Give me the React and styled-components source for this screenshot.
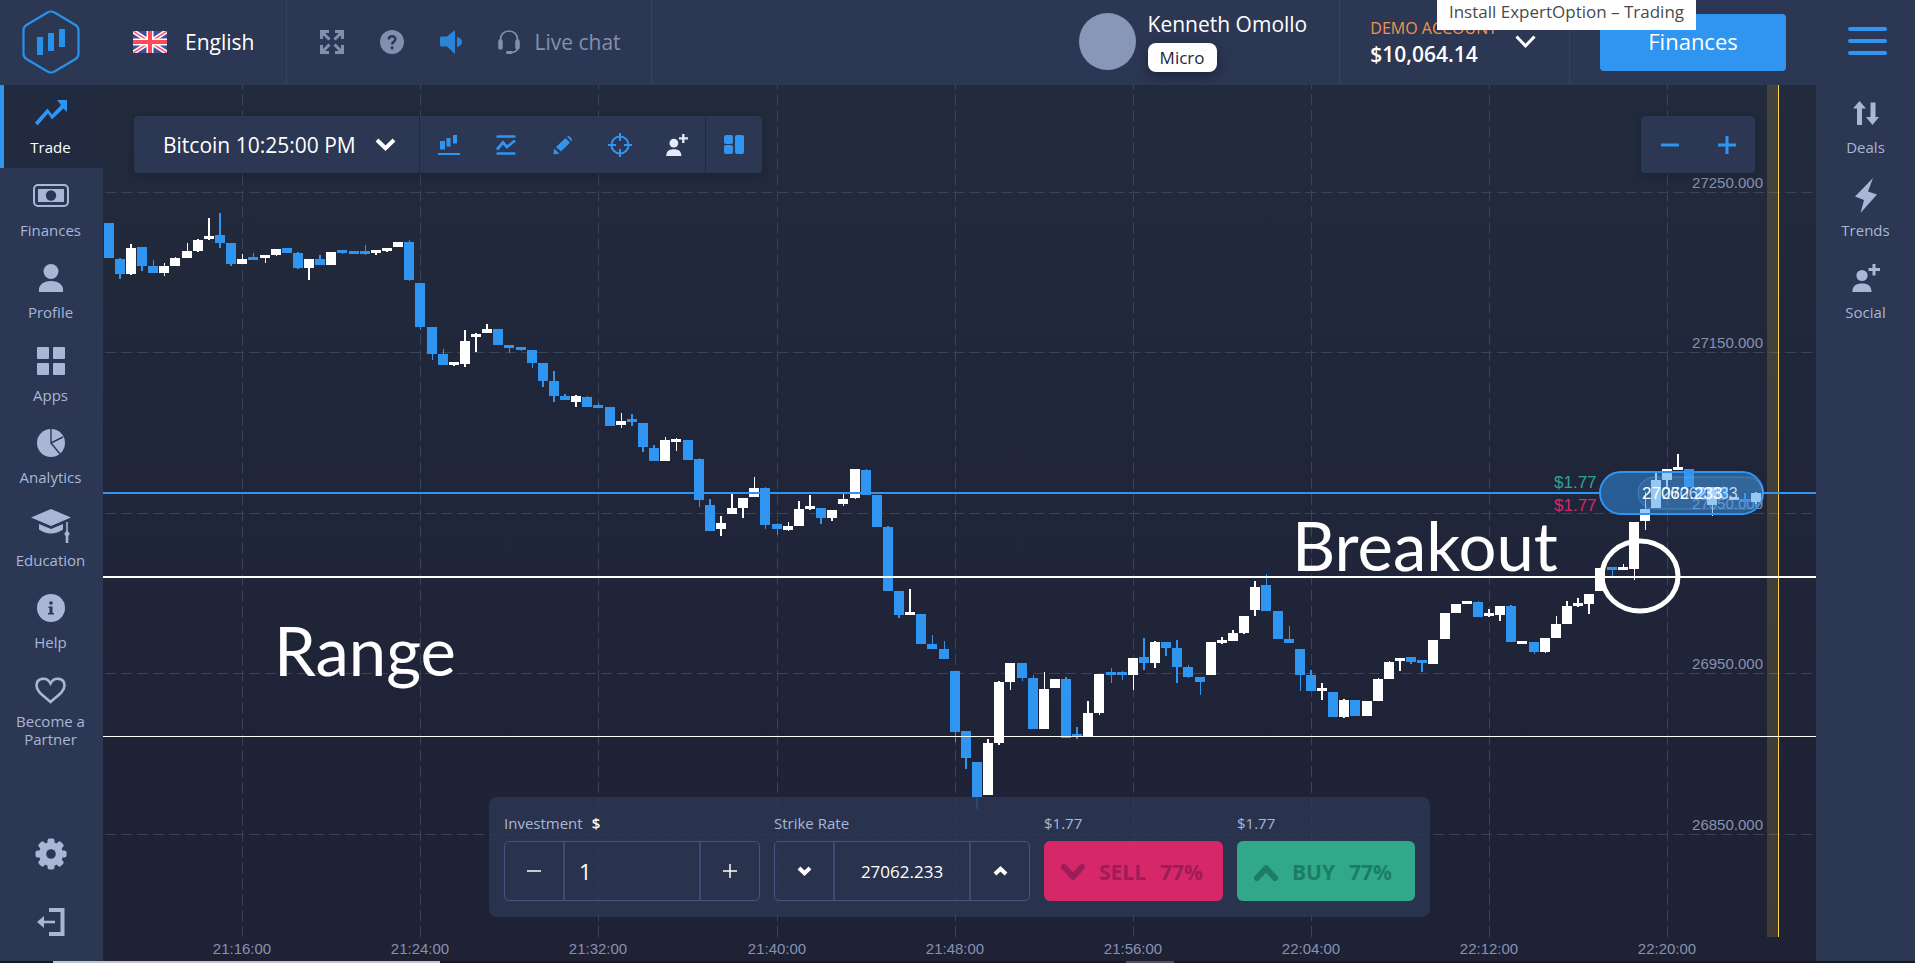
import React from "react";
import styled, { createGlobalStyle } from "styled-components";

const ui = '"Open Sans", "Noto Sans", sans-serif';
const panel = "#2c3753";
const accent = "#2f95f0";
const muted = "#a9b6d6";

const GlobalStyle = createGlobalStyle`
  *, *::before, *::after { box-sizing: border-box; }
  body { margin: 0; background: #1f2335; font-family: ${ui}; color: #fff; }
  button, input { font: inherit; color: inherit; }
  button { background: none; border: 0; padding: 0; cursor: pointer; }
  a { color: inherit; text-decoration: none; }
  svg { display: block; flex: none; }
`;

const Shell = styled.div`
  display: flex;
  flex-direction: column;
  height: 100vh;
  min-height: 900px;
  overflow: hidden;
`;

/* ---------- header ---------- */
const Header = styled.header`
  display: flex;
  align-items: stretch;
  flex: none;
  height: 85px;
  background: ${panel};
`;
const LogoLink = styled.a`
  display: flex;
  align-items: center;
  padding: 0 0 2px 22px;
  width: 103px;
`;
const HeaderCell = styled.div`
  display: flex;
  align-items: center;
  gap: ${(p) => p.$gap || 0}px;
  padding: 0 ${(p) => p.$right || 30}px ${(p) => (p.$last ? 0 : 2)}px ${(p) => p.$left || 30}px;
  border-right: ${(p) => (p.$last ? "0" : "1px solid #36425f")};
`;
const LanguageButton = styled.button`
  display: flex;
  align-items: center;
  gap: 18px;
  font-size: 21px;
`;
const IconButton = styled.button`
  display: flex;
  align-items: center;
  gap: 14px;
  color: ${(p) => p.$color || "#8290b0"};
  font-size: 21px;
`;
const Push = styled.div`
  flex: 1;
`;
const Avatar = styled.div`
  width: 57px;
  height: 57px;
  border-radius: 50%;
  background: #8896b8;
`;
const UserInfo = styled.div`
  display: flex;
  flex-direction: column;
  align-items: flex-start;
  gap: 6px;
`;
const UserName = styled.div`
  font-size: 21px;
  line-height: 26px;
`;
const Badge = styled.div`
  padding: 0 12px;
  border-radius: 8px;
  background: #fff;
  color: #22283a;
  font-size: 17px;
  line-height: 29px;
  box-shadow: 0 4px 12px rgba(15, 20, 40, 0.5);
`;
const AccountInfo = styled.div`
  display: flex;
  flex-direction: column;
`;
const AccountType = styled.div`
  color: #f0934e;
  font-size: 16px;
  line-height: 24px;
`;
const Balance = styled.div`
  font-size: 21px;
  font-weight: 600;
  line-height: 28px;
`;
const FinanceButton = styled.button`
  width: 186px;
  height: 57px;
  padding-bottom: 3px;
  border-radius: 4px;
  background: ${accent};
  font-size: 22px;
`;
const MenuButton = styled.button`
  display: flex;
  flex-direction: column;
  justify-content: center;
  align-items: center;
  gap: 8px;
  width: 95px;
  margin-left: -1px;
  padding: 0 0 4px 0;
`;
const MenuBar = styled.span`
  width: 39px;
  height: 4px;
  border-radius: 2px;
  background: ${accent};
`;
const Tooltip = styled.div`
  position: absolute;
  top: 0;
  right: 219px;
  z-index: 5;
  width: 259px;
  height: 30px;
  background: #fff;
  color: #4a4a4a;
  font-size: 17px;
  line-height: 24px;
  text-align: center;
  white-space: nowrap;
`;

/* ---------- body ---------- */
const Main = styled.div`
  display: grid;
  grid-template-columns: 103px minmax(0, 1fr) 99px;
  flex: 1;
  min-height: 0;
`;
const Side = styled.nav`
  display: flex;
  flex-direction: column;
  justify-content: space-between;
  padding-left: ${(p) => (p.$right ? 2 : 0)}px;
  background: ${panel};
`;
const SideList = styled.div`
  display: grid;
  grid-auto-rows: minmax(0, 1fr);
  height: ${(p) => (p.$rows === 8 ? 660 : 248)}px;
`;
const SideItem = styled.a`
  display: flex;
  flex-direction: column;
  align-items: center;
  padding: 8px 2px 0 0;
  gap: ${(p) => (p.$tight ? 1 : 2)}px;
  box-shadow: ${(p) => (p.$active ? `inset 4px 0 ${accent}` : "none")};
  background: ${(p) => (p.$active ? "#222a40" : "transparent")};
  color: ${(p) => (p.$active ? "#fff" : muted)};
  font-size: 15px;
  line-height: ${(p) => (p.$tight ? 18 : 24)}px;
  text-align: center;
`;
const SideIcon = styled.span`
  display: flex;
  flex: none;
  align-items: center;
  height: 40px;
  color: ${(p) => (p.$active ? accent : muted)};
`;
const SideLabel = styled.span`
  max-width: 92px;
`;
const SideFoot = styled.div`
  display: flex;
  flex-direction: column;
  align-items: center;
  gap: 38px;
  padding: 0 2px 25px 0;
  color: ${muted};
`;
const Strip = styled.div`
  display: grid;
  grid-template-columns: 53px 387px 686px 48px 1fr;
  flex: none;
  height: 2px;
  background: #17181c;
`;
const StripMark = styled.span`
  grid-column: ${(p) => p.$column};
  background: ${(p) => p.$color};
`;

/* ---------- chart area ---------- */
const Stage = styled.main`
  position: relative;
  display: flex;
  flex-direction: column;
  justify-content: space-between;
  min-width: 0;
  padding: 31px 31px 44px;
  overflow: hidden;
`;
const ChartSvg = styled.svg`
  position: absolute;
  inset: 0;
  width: 100%;
  height: 100%;
`;
const TopTools = styled.div`
  position: relative;
  display: flex;
  justify-content: space-between;
  padding-right: 30px;
`;
const ToolGroup = styled.div`
  display: flex;
  height: 57px;
  border-radius: 4px;
  background: ${panel};
  box-shadow: 0 2px 8px rgba(10, 15, 30, 0.3);
`;
const AssetButton = styled.button`
  display: flex;
  align-items: center;
  gap: 19px;
  width: 286px;
  padding-left: 29px;
  border-right: 1px solid #222a40;
  font-size: 21px;
`;
const Tool = styled.button`
  display: flex;
  align-items: center;
  justify-content: center;
  width: 57px;
  color: ${(p) => p.$color || accent};
  border-left: ${(p) => (p.$split ? "1px solid #222a40" : "0")};
`;
const TradePanel = styled.form`
  position: relative;
  align-self: center;
  display: grid;
  grid-template-columns: 256px 256px 179px 178px;
  gap: 14px;
  height: 120px;
  padding: 11px 15px 16px;
  border-radius: 8px;
  background: rgba(44, 55, 83, 0.84);
`;
const Field = styled.div`
  display: flex;
  flex-direction: column;
  justify-content: space-between;
`;
const FieldLabel = styled.label`
  display: flex;
  gap: 9px;
  color: ${muted};
  font-size: 15px;
  line-height: 30px;
`;
const Currency = styled.span`
  color: #fff;
  font-weight: 600;
`;
const Stepper = styled.div`
  display: grid;
  grid-template-columns: 58px 1fr 58px;
  height: 60px;
  border: 1px solid #465682;
  border-radius: 5px;
`;
const StepButton = styled.button`
  display: flex;
  align-items: center;
  justify-content: center;
`;
const StepInput = styled.input`
  min-width: 0;
  width: 100%;
  padding: 0 14px;
  border: 0;
  border-left: 2px solid #3d4c74;
  border-right: 2px solid #3d4c74;
  border-radius: 0;
  background: transparent;
  outline: 0;
  font-size: ${(p) => (p.$large ? 22 : 17)}px;
  text-align: ${(p) => (p.$large ? "left" : "center")};
`;
const DealButton = styled.button`
  display: flex;
  align-items: center;
  gap: 14px;
  height: 60px;
  padding: 2px 0 0 17px;
  border-radius: 6px;
  background: ${(p) => p.$bg};
  color: ${(p) => p.$fg};
  font-size: 21px;
  font-weight: 700;
  white-space: nowrap;
`;

/* ---------- icons ---------- */
const Logo = () => (
  <svg width="58" height="64" viewBox="0 0 58 64" fill="none">
    <path d="M25.5 2.5q3.500-2 7 0L53.500 15q3 2 3 5v24q0 3-3 5L32.500 61.500q-3.500 2-7 0L4.500 49q-3-2-3-5V20q0-3 3-5z" stroke="#2593ea" strokeWidth="2.200" />
    <path d="M15 27h6v18h-6zM26 23h6v18h-6zM37 19h6v18h-6z" fill="#2593ea" />
  </svg>
);
const Flag = () => (
  <svg width="34" height="22" viewBox="0 0 34 22">
    <path fill="#414b9c" d="M0 0h34v22H0z" />
    <path d="M0 0l34 22M34 0L0 22" stroke="#fff" strokeWidth="4.500" />
    <path d="M0 0l34 22M34 0L0 22" stroke="#ff5a68" strokeWidth="1.600" />
    <path d="M17 0v22M0 11h34" stroke="#fff" strokeWidth="7" />
    <path d="M17 0v22M0 11h34" stroke="#ff4b55" strokeWidth="4" />
  </svg>
);
const Expand = () => (
  <svg width="24" height="24" viewBox="0 0 24 24" fill="none" stroke="currentColor" strokeWidth="3">
    <path d="M1.500 9V1.500H9M2 2l7.500 7.500M15 1.500h7.500V9M22 2l-7.500 7.500M1.500 15v7.500H9M2 22l7.500-7.500M15 22.500h7.500V15M22 22l-7.500-7.500" />
  </svg>
);
const Help = () => (
  <svg width="24" height="24" viewBox="0 0 24 24" fill="none">
    <circle cx="12" cy="12" r="12" fill="currentColor" />
    <path d="M8.800 9.500c0-4.600 6.600-4.200 6.600-.4 0 2.600-3.300 2.700-3.300 5.300" stroke={panel} strokeWidth="2.500" />
    <circle cx="12.100" cy="17.800" r="1.600" fill={panel} />
  </svg>
);
const Volume = () => (
  <svg width="22" height="24" viewBox="0 0 22 24" fill="#2a85d8">
    <path d="M1.500 6.500H7L15 0v24l-8-7.500H1.500Q0 16.500 0 15V8q0-1.500 1.500-1.500zM17 7q5 1 5 5t-5 5z" />
  </svg>
);
const Headset = () => (
  <svg width="22" height="24" viewBox="0 0 22 24" fill="none" stroke="currentColor">
    <path d="M2.500 11V9.500C2.500 4.500 6 1 11 1s8.500 3.500 8.500 8.500V11M19.500 18c0 3-2.500 4.500-7.500 4.500" strokeWidth="1.600" />
    <path d="M2.500 11.500v6M19.500 11.500v6" strokeWidth="4.500" strokeLinecap="round" />
    <path d="M9.500 22.500h3.500" strokeWidth="3" strokeLinecap="round" />
  </svg>
);
const Chevron = ({ w = 21, h = 13, up, thick = 3, round }) => (
  <svg width={w} height={h} viewBox={`0 0 ${w} ${h}`} fill="none" stroke="currentColor" strokeWidth={thick} strokeLinecap={round ? "round" : "butt"} strokeLinejoin={round ? "round" : "miter"}>
    <path d={up
      ? `M${thick / 2} ${h - thick / 2}L${w / 2} ${thick / 1.400}L${w - thick / 2} ${h - thick / 2}`
      : `M${thick / 2} ${thick / 2}L${w / 2} ${h - thick / 1.400}L${w - thick / 2} ${thick / 2}`} />
  </svg>
);
const TradeIcon = () => (
  <svg width="32" height="26" viewBox="0 0 32 26" fill="currentColor">
    <path d="M22 0h10v12l-3.500-3.500L17 19.500l-4-6L2.500 25.500 0 22.500l12.500-14L17 14.500 26 5z" />
  </svg>
);
const MoneyIcon = () => (
  <svg width="36" height="23" viewBox="0 0 36 23" fill="none">
    <rect x="1" y="1" width="34" height="21" rx="4" stroke="currentColor" strokeWidth="2" />
    <rect x="5" y="5" width="26" height="13" fill="currentColor" />
    <circle cx="18" cy="11.500" r="5.200" fill={panel} />
  </svg>
);
const PersonIcon = () => (
  <svg width="26" height="28" viewBox="0 0 26 28" fill="currentColor">
    <circle cx="13" cy="7.500" r="7.500" />
    <path d="M1 28c-1-7 4-11 12-11s13 4 12 11z" />
  </svg>
);
const AppsIcon = () => (
  <svg width="28" height="28" viewBox="0 0 28 28" fill="currentColor">
    <rect width="12" height="12" rx="1" /><rect x="16" width="12" height="12" rx="1" />
    <rect y="16" width="12" height="12" rx="1" /><rect x="16" y="16" width="12" height="12" rx="1" />
  </svg>
);
const PieIcon = () => (
  <svg width="28" height="28" viewBox="0 0 28 28">
    <circle cx="14" cy="14" r="14" fill="currentColor" />
    <path d="M14 0v14l12-6M14 14l9 11" fill="none" stroke={panel} strokeWidth="1.400" />
  </svg>
);
const CapIcon = () => (
  <svg width="40" height="34" viewBox="0 0 40 34" fill="currentColor">
    <path d="M20 0l20 8.500L20 17 0 8.500zM8 15l12 5 12-5v5.500Q26 24.500 20 24.500T8 20.500z" />
    <path d="M35.200 13h1.600v9l2 3-1.500 2v7h-2.600v-7l-1.500-2 2-3z" />
  </svg>
);
const InfoIcon = () => (
  <svg width="28" height="28" viewBox="0 0 28 28">
    <circle cx="14" cy="14" r="14" fill="currentColor" />
    <circle cx="14" cy="9" r="1.800" fill={panel} />
    <path d="M11.500 12.500h4V19H17v1.500h-6V19h1.500v-5h-1z" fill={panel} />
  </svg>
);
const HeartIcon = () => (
  <svg width="31" height="27" viewBox="0 0 31 27" fill="none" stroke="currentColor" strokeWidth="2.600">
    <path d="M15.500 25C8 18.500 1.500 14.500 1.500 8.500c0-7.500 10-9.500 14-2 4-7.500 14-5.500 14 2 0 6-6.500 10-14 16.500z" />
  </svg>
);
const GearIcon = () => (
  <svg width="32" height="32" viewBox="0 0 32 32">
    <g fill="currentColor">
      {[0, 45, 90, 135].map((a) => (
        <rect key={a} x="12.500" y="0.500" width="7" height="31" rx="2" transform={`rotate(${a} 16 16)`} />
      ))}
      <circle cx="16" cy="16" r="12" />
    </g>
    <circle cx="16" cy="16" r="4.800" fill={panel} />
  </svg>
);
const ExitIcon = () => (
  <svg width="28" height="28" viewBox="0 0 28 28" fill="none" stroke="currentColor">
    <path d="M12 2h13.500v24H12" strokeWidth="4" />
    <path d="M2 14h16" strokeWidth="2.600" />
    <path d="M0 14l7-6v12z" fill="currentColor" stroke="none" />
  </svg>
);
const DealsIcon = () => (
  <svg width="26" height="24" viewBox="0 0 26 24" fill="currentColor">
    <path d="M6.500 0L13 7.500H9V24H4V7.500H0zM17.500 1.500h5V16H26l-6.500 8L13 16h4.500z" />
  </svg>
);
const BoltIcon = () => (
  <svg width="22" height="35" viewBox="0 0 22 35" fill="currentColor">
    <path d="M18 0L0 18.500l9 3.500L5.500 35 22 16.500l-9-3z" />
  </svg>
);
const SocialIcon = ({ s = 28 }) => (
  <svg width={s} height={s} viewBox="0 0 28 28" fill="currentColor">
    <circle cx="10" cy="11.500" r="5.600" />
    <path d="M.3 28C.3 22 4 19.500 10 19.500S19.500 22 19.500 28z" />
    <path d="M20.500 0h3v4H28v3h-4.500v4.500h-3V7h-4V4h4z" />
  </svg>
);
const BarsIcon = () => (
  <svg width="22" height="21" viewBox="0 0 22 21" fill="currentColor">
    <path d="M2 7h5v8.500H2zM8.500 4h4v8.500h-4zM15 1h4v8.500h-4zM0 19h22v2H0z" />
  </svg>
);
const IndicatorIcon = () => (
  <svg width="20" height="20" viewBox="0 0 20 20" fill="none" stroke="currentColor">
    <path d="M1.500 1.500h17M1.500 18.500h17" strokeWidth="2.400" strokeLinecap="round" />
    <path d="M1 14.500l6-7 4 4.500 8-6.500" strokeWidth="2.800" />
  </svg>
);
const PencilIcon = () => (
  <svg width="20" height="20" viewBox="0 0 20 20" fill="currentColor">
    <path d="M12.500 3l4.500 4.500-9 9L3 12zM14 1.500q1.500-1 2.800.3l1.700 1.800q1 1.400 0 3zM1 13.500l5.500 5-6 1z" />
  </svg>
);
const TargetIcon = () => (
  <svg width="24" height="24" viewBox="0 0 24 24" fill="none" stroke="currentColor" strokeWidth="2">
    <circle cx="12" cy="12" r="8.500" />
    <path d="M12 0v8M12 16v8M0 12h8M16 12h8" />
  </svg>
);
const LayoutIcon = () => (
  <svg width="20" height="19" viewBox="0 0 20 19" fill="currentColor">
    <rect width="9" height="9" rx="2" /><rect y="10" width="9" height="9" rx="2" /><rect x="11" width="9" height="19" rx="2" />
  </svg>
);
const SignIcon = ({ plus, size = 18, thick = 3 }) => (
  <svg width={size} height={size} viewBox={`0 0 ${size} ${size}`} stroke="currentColor" strokeWidth={thick}>
    <path d={`M0 ${size / 2}h${size}${plus ? `M${size / 2} 0v${size}` : ""}`} />
  </svg>
);

/* ---------- chart data ---------- */
/* left edge, high, body top, body bottom, low, 1 = rising (white) */
const candles = [
  [104,223,223,258,258,0],[115,258,259,274,279,0],[126,244,248,274,275,1],[137,247,247,266,271,0],[148,260,266,273,273,0],
  [159,263,266,273,276,1],[170,257,258,266,266,1],[182,243,251,258,258,1],[193,239,240,251,252,1],[204,218,236,239,240,1],
  [215,213,235,243,248,0],[226,243,243,264,266,0],[237,254,259,264,264,1],[248,253,257,260,260,0],[260,255,255,258,263,1],
  [271,249,249,255,256,1],[282,248,248,253,253,0],[293,252,253,268,269,0],[304,259,259,268,280,1],[315,255,259,265,265,0],
  [326,252,252,265,265,1],[337,250,250,253,254,0],[349,251,251,254,254,0],[360,245,251,254,255,0],[371,250,250,253,255,1],
  [382,248,248,251,252,1],[393,242,242,247,247,1],[404,240,242,280,281,0],[415,283,283,327,330,0],[427,327,327,354,360,0],
  [438,349,354,365,365,0],[449,362,362,365,366,1],[460,330,341,364,367,1],[471,333,334,337,352,1],[482,324,329,333,333,1],
  [493,329,329,345,345,0],[504,345,345,348,353,0],[516,347,347,350,351,0],[527,350,350,363,368,0],[538,363,363,381,387,0],
  [549,371,381,396,402,0],[560,394,396,400,400,0],[571,395,396,402,407,1],[582,396,397,407,407,0],[593,403,405,408,408,0],
  [605,407,407,426,426,0],[616,413,421,425,428,1],[627,414,419,422,426,0],[638,423,423,447,452,0],[649,445,448,461,461,0],
  [660,437,440,461,461,1],[671,438,439,442,451,1],[683,440,440,460,460,0],[694,458,459,500,507,0],[705,499,505,531,531,0],
  [716,516,523,529,536,1],[727,494,508,514,514,1],[738,498,498,508,518,1],[749,477,488,497,497,1],[760,487,488,525,529,0],
  [772,523,524,529,535,0],[783,522,526,530,531,1],[794,501,509,526,526,1],[805,495,506,509,510,1],[816,508,508,518,524,0],
  [827,510,510,518,521,1],[838,494,499,504,506,1],[850,469,469,498,499,1],[861,469,470,495,495,0],[872,495,495,527,527,0],
  [883,526,527,591,591,0],[894,591,591,615,618,0],[905,589,612,615,615,1],[916,614,614,644,644,0],[927,635,644,649,649,0],
  [939,641,649,659,659,0],[950,671,671,732,742,0],[961,731,731,758,769,0],[972,762,762,797,809,0],[983,739,743,795,795,1],
  [994,681,682,743,745,1],[1005,663,663,682,690,1],[1017,663,663,678,681,0],[1028,675,678,729,729,0],[1039,672,689,729,729,1],
  [1050,679,679,688,688,1],[1061,677,679,738,738,0],[1072,727,734,737,739,0],[1083,701,713,736,736,1],[1094,674,674,713,715,1],
  [1106,668,672,675,683,0],[1117,671,672,675,680,0],[1128,658,658,675,690,1],[1139,638,657,663,670,0],[1150,641,642,663,668,1],
  [1161,642,642,648,656,0],[1172,640,648,667,683,0],[1183,665,667,677,678,0],[1195,677,677,682,695,0],[1206,642,642,675,675,1],
  [1217,637,640,643,644,1],[1228,630,633,641,641,1],[1239,616,616,633,634,1],[1250,581,587,610,616,1],[1261,574,585,611,611,0],
  [1273,611,611,639,639,0],[1284,626,639,643,643,0],[1295,649,649,675,691,0],[1306,670,675,691,691,0],[1317,683,688,691,700,1],
  [1328,692,692,717,717,0],[1339,699,700,717,718,1],[1350,700,700,716,716,0],[1362,701,701,716,716,1],[1373,678,679,701,701,1],
  [1384,661,662,679,679,1],[1395,658,658,661,671,1],[1406,657,657,662,664,0],[1417,660,660,663,672,0],[1428,640,640,664,664,1],
  [1440,613,613,639,639,1],[1451,604,604,613,613,1],[1462,601,601,604,604,1],[1473,601,602,617,617,0],[1484,609,613,616,617,1],
  [1495,606,606,615,621,1],[1506,605,606,642,642,0],[1517,641,641,644,644,1],[1529,642,642,652,654,0],[1540,638,638,652,653,1],
  [1551,616,624,638,638,1],[1562,601,606,624,624,1],[1573,598,603,606,607,1],[1584,594,594,604,614,1],[1595,568,568,591,591,1],
  [1607,567,567,570,576,0],[1618,564,567,570,570,1],[1629,522,522,569,580,1],[1640,492,509,521,530,1],[1651,473,480,508,508,1],
  [1662,469,469,480,489,1],[1673,454,467,470,470,1],[1684,469,469,487,487,0],[1696,487,487,498,498,0],[1707,487,487,505,516,1],
  [1718,486,487,498,498,0],[1729,497,497,500,500,1],[1740,493,499,502,502,0],[1751,492,493,502,504,1],
];
const times = [
  ["21:16:00", 242], ["21:24:00", 420], ["21:32:00", 598], ["21:40:00", 777], ["21:48:00", 955],
  ["21:56:00", 1133], ["22:04:00", 1311], ["22:12:00", 1489], ["22:20:00", 1667],
];
const prices = [["27250.000", 192], ["27150.000", 352], ["27050.000", 513], ["26950.000", 673], ["26850.000", 834]];

function Chart() {
  return (
    <ChartSvg viewBox="103 85 1713 876" preserveAspectRatio="xMaxYMax slice" fontFamily='"Liberation Sans", Arial, sans-serif'>
      <defs>
        <linearGradient id="sky" x1="0" y1="0" x2="0" y2="1">
          <stop offset="0" stopColor="#222b3b" />
          <stop offset="0.4" stopColor="#20263a" />
          <stop offset="1" stopColor="#1f2134" />
        </linearGradient>
      </defs>
      <rect x="103" y="85" width="1713" height="876" fill="url(#sky)" />
      <g stroke="#3a4457" strokeDasharray="11 5">
        {times.map(([t, x]) => <path key={t} d={`M${x + 0.5} 78V937`} />)}
        {prices.map(([p, y]) => <path key={p} d={`M105 ${y + 0.5}H1813`} />)}
      </g>
      <rect x="1767" y="85" width="11" height="852" fill="#f5c842" opacity="0.16" />
      <rect x="1778" y="85" width="1" height="852" fill="#ffd04c" />
      <g fontSize="15" fill="#8792b2">
        {times.map(([t, x]) => <text key={t} x={x} y="954" textAnchor="middle">{t}</text>)}
        {prices.map(([p, y]) => <text key={p} x="1763" y={y - 4} textAnchor="end">{p}</text>)}
      </g>
      {candles.map(([x, hi, top, bottom, lo, up], i) => {
        const thin = (i * 11.13) % 1 >= 0.5;
        return (
          <g key={x} fill={up ? "#fff" : accent}>
            <rect x={thin ? x + 5 : x + 4} y={hi} width={thin ? 1 : 2} height={lo - hi} />
            <rect x={x} y={top} width="10" height={bottom - top} />
          </g>
        );
      })}
      <path d="M103 493H1599M1764 493H1816" stroke={accent} strokeWidth="2" />
      <path d="M103 577H1816" stroke="#fff" strokeWidth="2" />
      <path d="M103 736.500H1816" stroke="#fff" />
      <rect x="1600" y="472" width="163" height="42" rx="21" fill={accent} fillOpacity="0.5" stroke={accent} strokeWidth="2" />
      <rect x="1638" y="477" width="125" height="32" rx="16" fill="#8fb6e0" fillOpacity="0.1" stroke="#9cc4ee" strokeOpacity="0.3" />
      <text x="1662" y="499" fontSize="16" fill="#b9d6f5">27062.833</text>
      <text x="1642" y="499" fontSize="17" fill="#fff">27062.233</text>
      <text x="1554" y="488" fontSize="17" fill="#2fa58a">$1.77</text>
      <text x="1554" y="511" fontSize="17" fill="#d62768">$1.77</text>
      <ellipse cx="1640" cy="576" rx="38" ry="35" fill="none" stroke="#fff" strokeWidth="5" />
      <g fill="#fff" fontSize="67" fontFamily='Lato, "Open Sans", sans-serif'>
        <text x="1292" y="571">Breakout</text>
        <text x="274" y="676">Range</text>
      </g>
    </ChartSvg>
  );
}

const leftItems = [
  ["Trade", TradeIcon], ["Finances", MoneyIcon], ["Profile", PersonIcon], ["Apps", AppsIcon],
  ["Analytics", PieIcon], ["Education", CapIcon], ["Help", InfoIcon], ["Become a Partner", HeartIcon],
];
const rightItems = [["Deals", DealsIcon], ["Trends", BoltIcon], ["Social", SocialIcon]];

function SideLinks({ items, active }) {
  return (
    <SideList $rows={items.length}>
      {items.map(([label, Icon]) => (
        <SideItem key={label} href="#" $active={label === active} $tight={label.length > 12}>
          <SideIcon $active={label === active}><Icon /></SideIcon>
          <SideLabel>{label}</SideLabel>
        </SideItem>
      ))}
    </SideList>
  );
}

export default function App() {
  return (
    <Shell>
      <GlobalStyle />
      <Header>
        <LogoLink href="#" aria-label="Home"><Logo /></LogoLink>
        <HeaderCell $right={32}>
          <LanguageButton><Flag />English</LanguageButton>
        </HeaderCell>
        <HeaderCell $gap={36} $left={33}>
          <IconButton aria-label="Full screen"><Expand /></IconButton>
          <IconButton aria-label="Help"><Help /></IconButton>
          <IconButton aria-label="Sound"><Volume /></IconButton>
          <IconButton><Headset />Live chat</IconButton>
        </HeaderCell>
        <Push />
        <HeaderCell $gap={12} $right={32}>
          <Avatar />
          <UserInfo>
            <UserName>Kenneth Omollo</UserName>
            <Badge>Micro</Badge>
          </UserInfo>
        </HeaderCell>
        <HeaderCell $gap={18} $left={30} $right={33}>
          <AccountInfo>
            <AccountType>DEMO ACCOUNT</AccountType>
            <Balance>$10,064.14</Balance>
          </AccountInfo>
          <IconButton $color="#fff" aria-label="Switch account"><Chevron /></IconButton>
        </HeaderCell>
        <HeaderCell $last $right={35}>
          <FinanceButton>Finances</FinanceButton>
        </HeaderCell>
        <MenuButton aria-label="Menu"><MenuBar /><MenuBar /><MenuBar /></MenuButton>
      </Header>
      <Tooltip role="tooltip">Install ExpertOption – Trading</Tooltip>

      <Main>
        <Side>
          <SideLinks items={leftItems} active="Trade" />
          <SideFoot>
            <IconButton $color={muted} aria-label="Settings"><GearIcon /></IconButton>
            <IconButton $color={muted} aria-label="Log out"><ExitIcon /></IconButton>
          </SideFoot>
        </Side>

        <Stage>
          <Chart />
          <TopTools>
            <ToolGroup>
              <AssetButton>Bitcoin 10:25:00 PM<Chevron thick={4} /></AssetButton>
              <Tool aria-label="Chart type"><BarsIcon /></Tool>
              <Tool aria-label="Indicators"><IndicatorIcon /></Tool>
              <Tool aria-label="Draw"><PencilIcon /></Tool>
              <Tool aria-label="Crosshair"><TargetIcon /></Tool>
              <Tool aria-label="Invite" $color="#e4eaf6"><SocialIcon s={22} /></Tool>
              <Tool aria-label="Layout" $split><LayoutIcon /></Tool>
            </ToolGroup>
            <ToolGroup>
              <Tool aria-label="Zoom out"><SignIcon /></Tool>
              <Tool aria-label="Zoom in"><SignIcon plus /></Tool>
            </ToolGroup>
          </TopTools>

          <TradePanel>
            <Field>
              <FieldLabel htmlFor="investment">Investment <Currency>$</Currency></FieldLabel>
              <Stepper>
                <StepButton type="button" aria-label="Decrease"><SignIcon size={14} thick={1.5} /></StepButton>
                <StepInput id="investment" defaultValue="1" $large />
                <StepButton type="button" aria-label="Increase"><SignIcon plus size={14} thick={1.5} /></StepButton>
              </Stepper>
            </Field>
            <Field>
              <FieldLabel htmlFor="strike">Strike Rate</FieldLabel>
              <Stepper>
                <StepButton type="button" aria-label="Lower strike"><Chevron w={15} h={10} thick={4} /></StepButton>
                <StepInput id="strike" defaultValue="27062.233" />
                <StepButton type="button" aria-label="Higher strike"><Chevron w={15} h={10} thick={4} up /></StepButton>
              </Stepper>
            </Field>
            <Field>
              <FieldLabel htmlFor="sell">$1.77</FieldLabel>
              <DealButton id="sell" type="button" $bg="#d62768" $fg="#9c1d58">
                <Chevron w={24} h={17} thick={6} round /><span>SELL</span><span>77%</span>
              </DealButton>
            </Field>
            <Field>
              <FieldLabel htmlFor="buy">$1.77</FieldLabel>
              <DealButton id="buy" type="button" $bg="#32a88a" $fg="#1c7d65">
                <Chevron w={24} h={17} thick={6} round up /><span>BUY</span><span>77%</span>
              </DealButton>
            </Field>
          </TradePanel>
        </Stage>

        <Side $right>
          <SideLinks items={rightItems} />
        </Side>
      </Main>
      <Strip>
        <StripMark $column={2} $color="#c4c4c8" />
        <StripMark $column={4} $color="#505256" />
      </Strip>
    </Shell>
  );
}
